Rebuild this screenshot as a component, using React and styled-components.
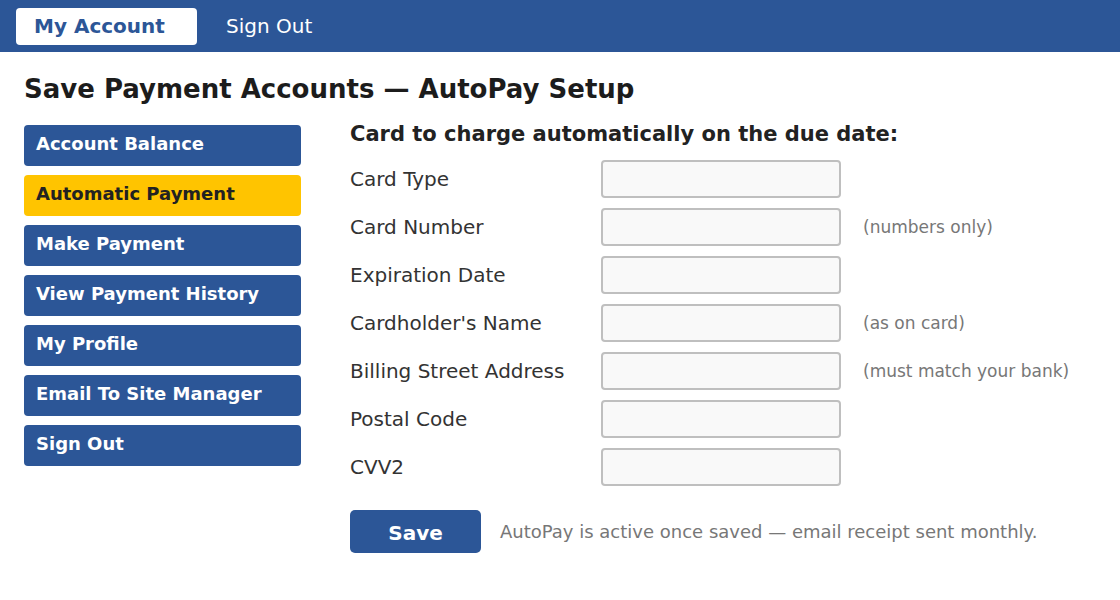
import React from "react";
import styled, { createGlobalStyle } from "styled-components";

const GlobalStyle = createGlobalStyle`
  body {
    margin: 0;
    background: #ffffff;
    font-family: "DejaVu Sans", "Liberation Sans", sans-serif;
  }
`;

const blue = "#2c5697";

const TopBar = styled.div`
  display: flex;
  align-items: flex-start;
  gap: 11px;
  height: 52px;
  box-sizing: border-box;
  padding: 8px 16px 0;
  background: ${blue};
`;

const Tab = styled.a`
  display: flex;
  align-items: center;
  height: 37px;
  box-sizing: border-box;
  padding: 0 18px 2px;
  border-radius: 4px;
  font-size: 20px;
  font-weight: ${(p) => (p.$active ? 700 : 400)};
  color: ${(p) => (p.$active ? blue : "#ffffff")};
  background: ${(p) => (p.$active ? "#ffffff" : "transparent")};
  width: ${(p) => (p.$active ? "181px" : "auto")};
  text-decoration: none;
`;

const Page = styled.div`
  padding: 22px 24px 0;
`;

const Title = styled.h1`
  margin: 0;
  font-size: 26px;
  font-weight: 700;
  color: #1c1c1c;
`;

const Body = styled.div`
  display: flex;
  align-items: flex-start;
  gap: 49px;
  margin-top: 16px;
`;

const SideNav = styled.nav`
  display: flex;
  flex-direction: column;
  gap: 9px;
  width: 277px;
  padding-top: 5px;
`;

const SideLink = styled.a`
  display: flex;
  align-items: center;
  height: 41px;
  box-sizing: border-box;
  padding: 0 12px 4px;
  border-radius: 4px;
  font-size: 18px;
  font-weight: 700;
  text-decoration: none;
  color: ${(p) => (p.$active ? "#222222" : "#ffffff")};
  background: ${(p) => (p.$active ? "#ffc400" : blue)};
`;

const FormArea = styled.div`
  display: flex;
  flex-direction: column;
`;

const Subheading = styled.h2`
  margin: 2px 0 14px;
  font-size: 21px;
  font-weight: 700;
  color: #222222;
`;

const Rows = styled.div`
  display: flex;
  flex-direction: column;
  gap: 10px;
`;

const Row = styled.div`
  display: grid;
  grid-template-columns: 229px 240px auto;
  column-gap: 22px;
  align-items: center;
`;

const Label = styled.label`
  font-size: 20px;
  color: #333333;
`;

const Field = styled.input`
  height: 38px;
  box-sizing: border-box;
  border: 2px solid #bfbfbf;
  border-radius: 4px;
  background: #f9f9f9;
  font-family: inherit;
  font-size: 18px;
  outline: none;
`;

const Hint = styled.span`
  font-size: 17px;
  color: #777777;
`;

const Actions = styled.div`
  display: flex;
  align-items: center;
  gap: 19px;
  margin-top: 24px;
`;

const SaveButton = styled.button`
  width: 131px;
  height: 43px;
  border: none;
  border-radius: 5px;
  background: ${blue};
  color: #ffffff;
  font-family: inherit;
  font-size: 20px;
  font-weight: 700;
  padding-top: 4px;
`;

const Note = styled.span`
  font-size: 18px;
  color: #777777;
`;

const menu = [
  "Account Balance",
  "Automatic Payment",
  "Make Payment",
  "View Payment History",
  "My Profile",
  "Email To Site Manager",
  "Sign Out",
];

const fields = [
  ["Card Type", ""],
  ["Card Number", "(numbers only)"],
  ["Expiration Date", ""],
  ["Cardholder's Name", "(as on card)"],
  ["Billing Street Address", "(must match your bank)"],
  ["Postal Code", ""],
  ["CVV2", ""],
];

export default function App() {
  return (
    <>
      <GlobalStyle />
      <TopBar>
        <Tab $active>My Account</Tab>
        <Tab>Sign Out</Tab>
      </TopBar>
      <Page>
        <Title>Save Payment Accounts — AutoPay Setup</Title>
        <Body>
          <SideNav>
            {menu.map((item) => (
              <SideLink key={item} $active={item === "Automatic Payment"}>
                {item}
              </SideLink>
            ))}
          </SideNav>
          <FormArea>
            <Subheading>Card to charge automatically on the due date:</Subheading>
            <Rows>
              {fields.map(([label, hint]) => (
                <Row key={label}>
                  <Label>{label}</Label>
                  <Field type="text" />
                  <Hint>{hint}</Hint>
                </Row>
              ))}
            </Rows>
            <Actions>
              <SaveButton>Save</SaveButton>
              <Note>AutoPay is active once saved — email receipt sent monthly.</Note>
            </Actions>
          </FormArea>
        </Body>
      </Page>
    </>
  );
}
